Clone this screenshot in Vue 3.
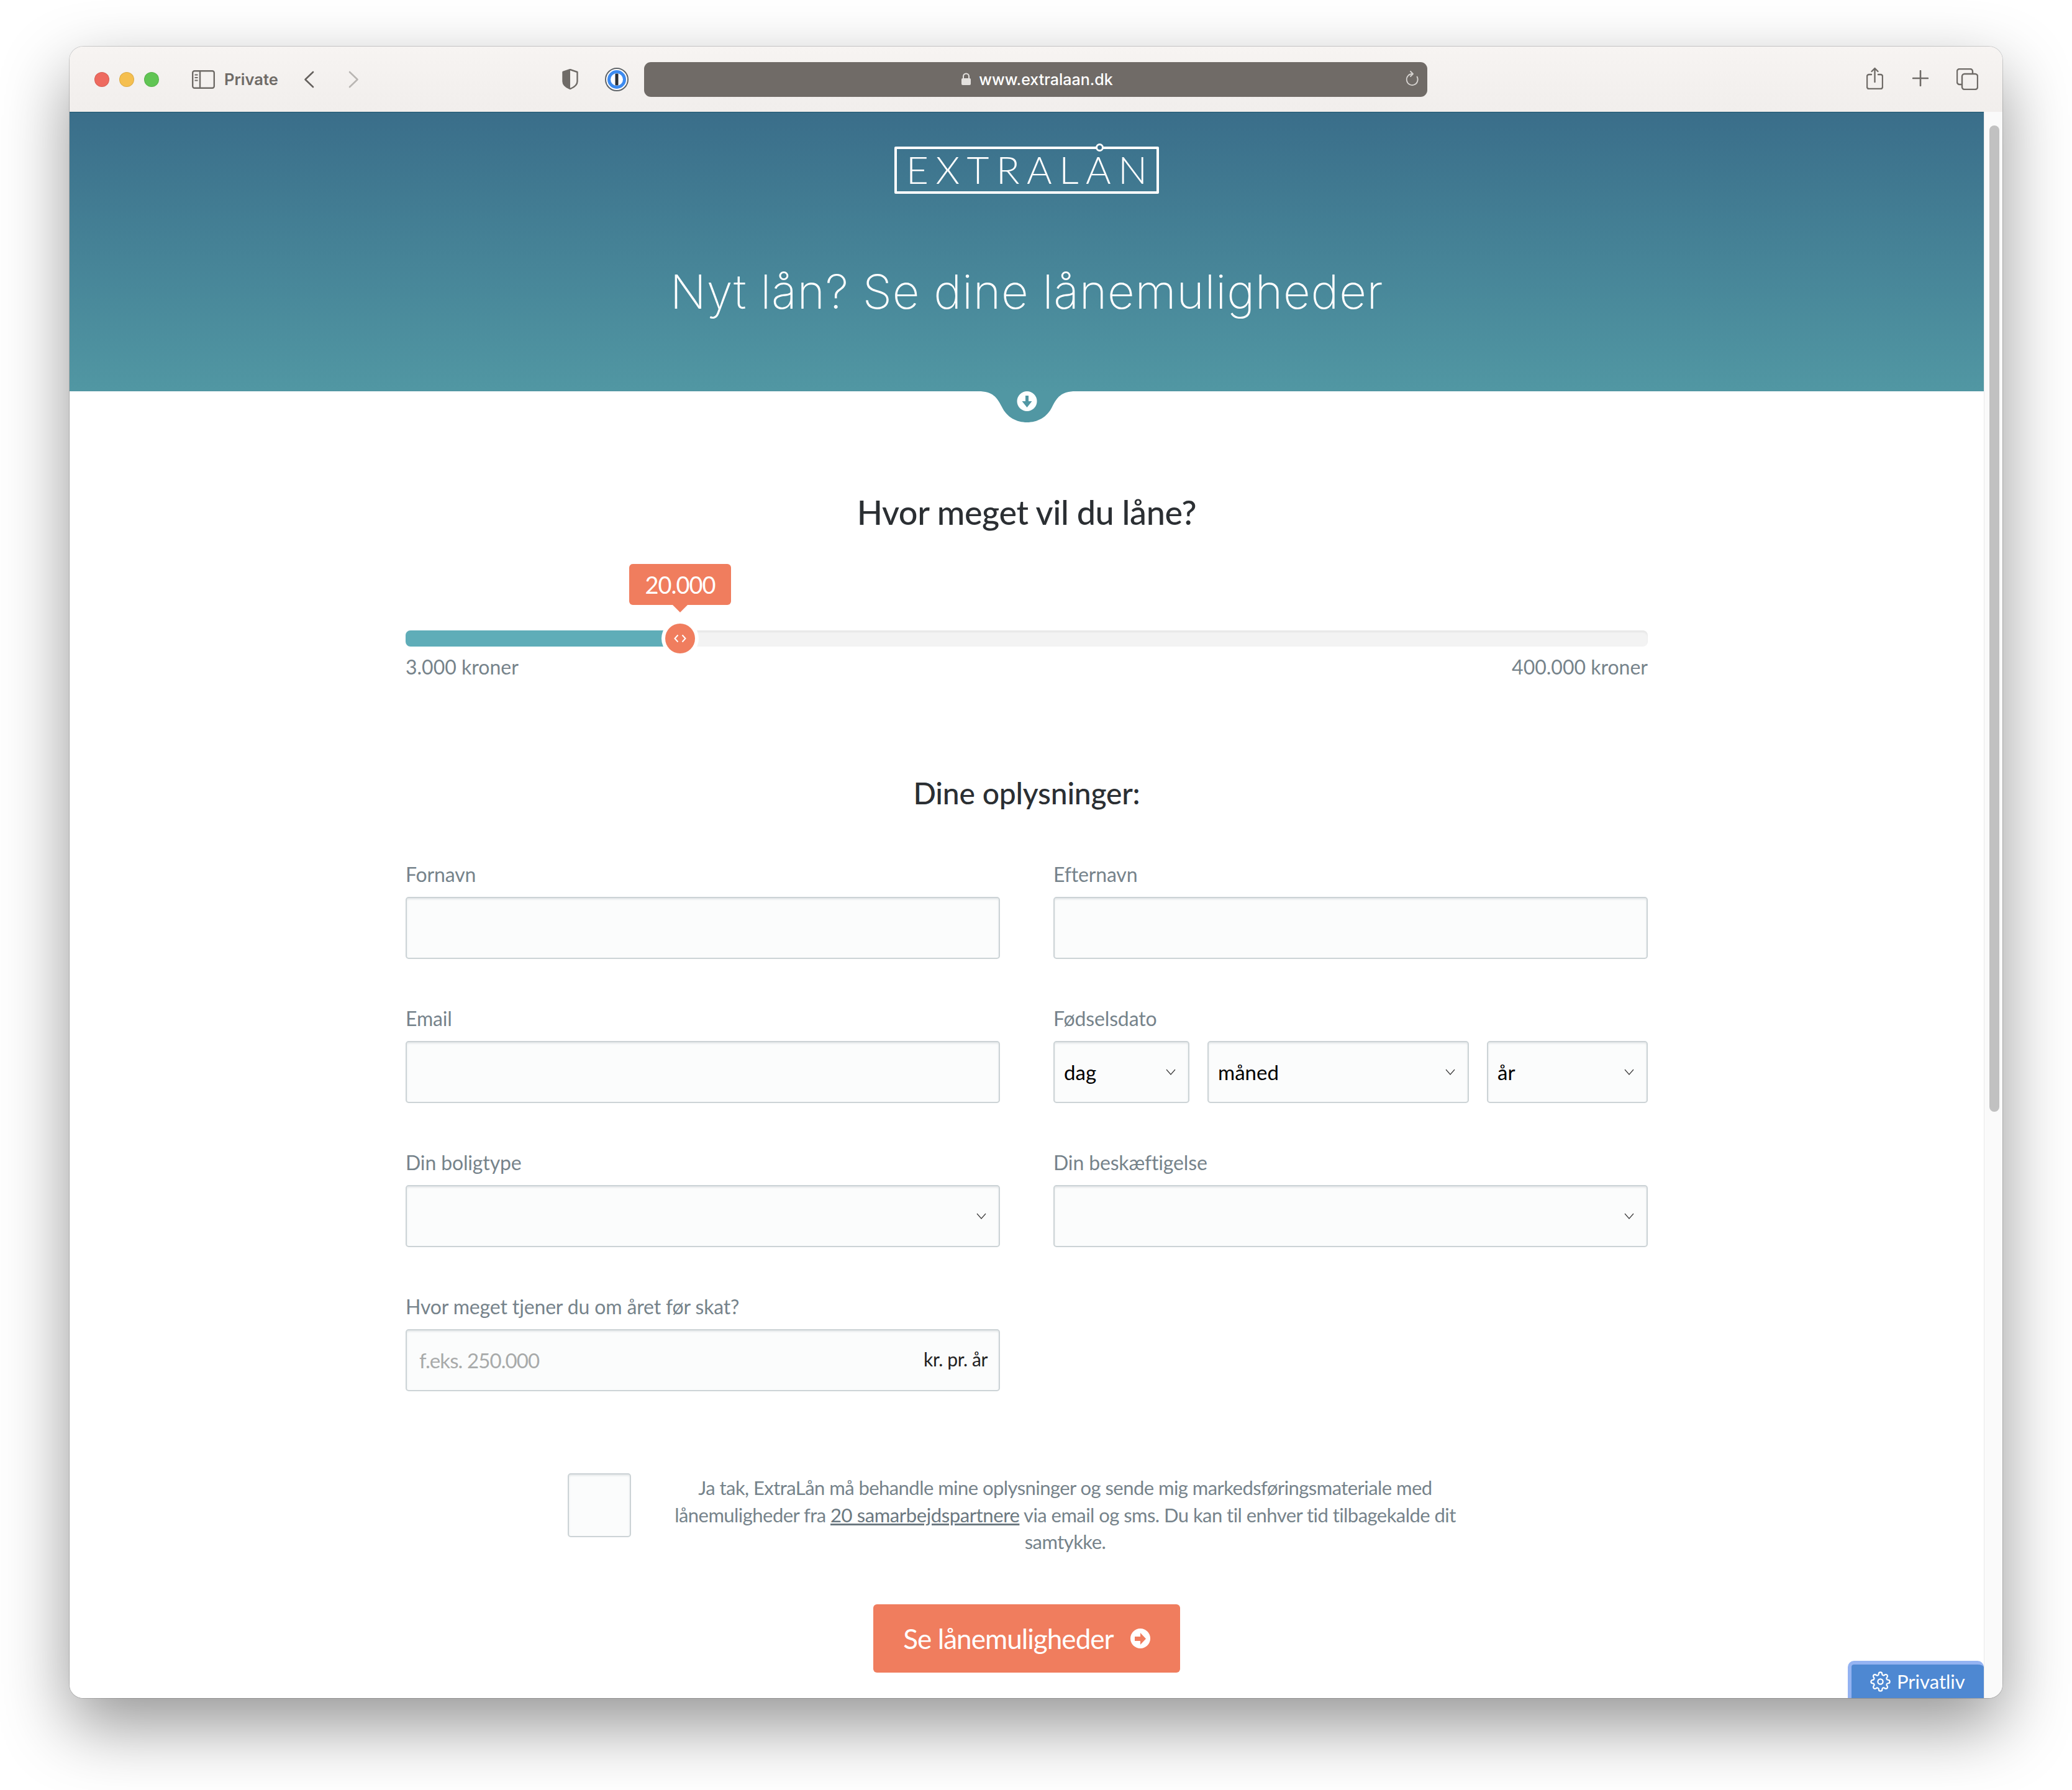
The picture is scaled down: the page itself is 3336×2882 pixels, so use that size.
<template>
  <div class="page">
    <div class="window">
      <div class="toolbar">
        <div class="lights">
          <span class="light red"></span>
          <span class="light yellow"></span>
          <span class="light green"></span>
        </div>
        <svg class="tb-sidebar" width="37" height="30" viewBox="0 0 37 30" fill="none" stroke="#6f6b67" stroke-width="2.4">
          <rect x="1.2" y="1.2" width="34.6" height="27.6" rx="3" />
          <path d="M13 1v28" />
          <path d="M4.500 7.500h5M4.500 12h5M4.500 16.500h5" stroke-width="2" />
        </svg>
        <span class="tb-private">Private</span>
        <svg class="tb-back" width="17" height="28" viewBox="0 0 17 28" fill="none" stroke="#65615e" stroke-width="2.600" stroke-linecap="round" stroke-linejoin="round">
          <path d="M15 2 2.500 14 15 26" />
        </svg>
        <svg class="tb-forward" width="17" height="28" viewBox="0 0 17 28" fill="none" stroke="#b9b6b3" stroke-width="2.600" stroke-linecap="round" stroke-linejoin="round">
          <path d="M2 2l12.500 12L2 26" />
        </svg>
        <svg class="tb-shield" width="26" height="33" viewBox="0 0 26 33">
          <path d="M13 1 24.500 5v15c0 5-5 9.500-11.500 12C6.500 29.500 1.500 25 1.500 20V5z" fill="none" stroke="#6f6b67" stroke-width="2.400" stroke-linejoin="round" />
          <path d="M13 1 1.500 5v15c0 5 5 9.500 11.500 12z" fill="#6f6b67" />
        </svg>
        <svg class="tb-onepass" width="38" height="38" viewBox="0 0 38 38">
          <circle cx="19" cy="19" r="18" fill="#fff" stroke="#5f6468" stroke-width="2" />
          <circle cx="19" cy="19" r="12.500" fill="#fff" stroke="#3d8bf0" stroke-width="5" />
          <rect x="16.500" y="9.500" width="5" height="19" rx="1" fill="#2a2e33" />
        </svg>
        <div class="address">
          <svg class="lock" width="17" height="21" viewBox="0 0 17 21">
            <path d="M4 9V6a4.500 4.500 0 0 1 9 0v3" fill="none" stroke="#e4e1de" stroke-width="2" />
            <rect x="1" y="9" width="15" height="11" rx="2" fill="#e4e1de" />
          </svg>
          <span class="url">www.extralaan.dk</span>
          <svg class="reload" width="22" height="25" viewBox="0 0 22 25" fill="none" stroke="#d6d3d0" stroke-width="1.800" stroke-linecap="round" stroke-linejoin="round">
            <path d="M18.500 9.500A9 9 0 1 1 11 5" />
            <path d="M8 1l4 4-4 4" />
          </svg>
        </div>
        <svg class="tb-share" width="27" height="36" viewBox="0 0 27 36" fill="none" stroke="#6f6b67" stroke-width="2.400" stroke-linecap="round" stroke-linejoin="round">
          <path d="M8 12H4a3 3 0 0 0-3 3v17a3 3 0 0 0 3 3h19a3 3 0 0 0 3-3V15a3 3 0 0 0-3-3h-4" />
          <path d="M13.500 24V2M8.500 7l5-5 5 5" />
        </svg>
        <svg class="tb-plus" width="26" height="26" viewBox="0 0 26 26" stroke="#6f6b67" stroke-width="2.600" stroke-linecap="round">
          <path d="M13 1v24M1 13h24" />
        </svg>
        <svg class="tb-tabs" width="35" height="35" viewBox="0 0 35 35" fill="none" stroke="#6f6b67" stroke-width="2.400">
          <path d="M8 26H5a4 4 0 0 1-4-4V5a4 4 0 0 1 4-4h17a4 4 0 0 1 4 4v3" />
          <rect x="9" y="9" width="25" height="25" rx="4" />
        </svg>
      </div>

      <div class="viewport">
        <main class="content">
          <header class="hero">
            <div class="logo"><span>EXTRALAN</span></div>
            <h1>Nyt lån? Se dine lånemuligheder</h1>
            <div class="notch">
              <svg width="157" height="50" viewBox="0 0 157 50">
                <path d="M0 0C24 0 30 10 38 25C46 42 62 50 78.500 50C95 50 111 42 119 25C127 10 133 0 157 0Z" fill="#5197a3" />
                <circle cx="78.500" cy="16" r="16" fill="#fff" />
                <path d="M76 7h5v9h5.500l-8 10-8-10H76z" fill="#5197a3" />
              </svg>
            </div>
          </header>

          <section class="form-area">
            <h2 class="first">Hvor meget vil du låne?</h2>
            <div class="slider">
              <div class="fill"></div>
              <div class="tip">20.000</div>
              <div class="thumb">
                <svg width="20" height="14" viewBox="0 0 20 14" fill="none" stroke="#fff" stroke-width="2">
                  <path d="M6.500 1.500 1.500 7l5 5.500M13.500 1.500l5 5.500-5 5.500" />
                </svg>
              </div>
            </div>
            <div class="range">
              <span>3.000 kroner</span>
              <span>400.000 kroner</span>
            </div>

            <h2 class="second">Dine oplysninger:</h2>
            <form class="fields" @submit.prevent>
              <div class="field">
                <label>Fornavn</label>
                <input type="text" />
              </div>
              <div class="field">
                <label>Efternavn</label>
                <input type="text" />
              </div>
              <div class="field">
                <label>Email</label>
                <input type="email" />
              </div>
              <div class="field">
                <label>Fødselsdato</label>
                <div class="date">
                  <div v-for="part in dateParts" :key="part" class="select-wrap">
                    <select>
                      <option>{{ part }}</option>
                    </select>
                    <svg class="chevron" width="16" height="10" viewBox="0 0 16 10" fill="none" stroke="#3c3c3c" stroke-width="1.200">
                      <path d="M1 1l7 8 7-8" />
                    </svg>
                  </div>
                </div>
              </div>
              <div class="field">
                <label>Din boligtype</label>
                <div class="select-wrap">
                  <select><option></option></select>
                  <svg class="chevron" width="16" height="10" viewBox="0 0 16 10" fill="none" stroke="#3c3c3c" stroke-width="1.200">
                    <path d="M1 1l7 8 7-8" />
                  </svg>
                </div>
              </div>
              <div class="field">
                <label>Din beskæftigelse</label>
                <div class="select-wrap">
                  <select><option></option></select>
                  <svg class="chevron" width="16" height="10" viewBox="0 0 16 10" fill="none" stroke="#3c3c3c" stroke-width="1.200">
                    <path d="M1 1l7 8 7-8" />
                  </svg>
                </div>
              </div>
              <div class="field">
                <label>Hvor meget tjener du om året før skat?</label>
                <div class="income">
                  <input type="text" placeholder="f.eks. 250.000" />
                  <span>kr. pr. år</span>
                </div>
              </div>
            </form>

            <div class="consent">
              <div class="check"></div>
              <p>
                Ja tak, ExtraLån må behandle mine oplysninger og sende mig markedsføringsmateriale med
                lånemuligheder fra <a href="#">20 samarbejdspartnere</a> via email og sms. Du kan til enhver tid tilbagekalde dit
                samtykke.
              </p>
            </div>

            <button class="submit" type="button">
              Se lånemuligheder
              <svg width="32" height="32" viewBox="0 0 32 32">
                <circle cx="16" cy="16" r="16" fill="#fff" />
                <path d="M7 13h9V7l9 9.500-9 9.500v-6H7z" fill="#f07d5e" />
              </svg>
            </button>
          </section>

          <div class="privacy">
            <svg width="33" height="33" viewBox="0 0 24 24" fill="none" stroke="#fff" stroke-width="1.600" stroke-linecap="round" stroke-linejoin="round">
              <circle cx="12" cy="12" r="3" />
              <path d="M19.400 15a1.650 1.650 0 0 0 .33 1.820l.06.06a2 2 0 0 1 0 2.830 2 2 0 0 1-2.830 0l-.06-.06a1.650 1.650 0 0 0-1.820-.33 1.650 1.650 0 0 0-1 1.510V21a2 2 0 0 1-2 2 2 2 0 0 1-2-2v-.09A1.650 1.650 0 0 0 9 19.400a1.650 1.650 0 0 0-1.820.33l-.06.06a2 2 0 0 1-2.830 0 2 2 0 0 1 0-2.830l.06-.06a1.650 1.650 0 0 0 .33-1.820 1.650 1.650 0 0 0-1.510-1H3a2 2 0 0 1-2-2 2 2 0 0 1 2-2h.09A1.650 1.650 0 0 0 4.600 9a1.650 1.650 0 0 0-.33-1.820l-.06-.06a2 2 0 0 1 0-2.830 2 2 0 0 1 2.830 0l.06.06a1.650 1.650 0 0 0 1.820.33H9a1.650 1.650 0 0 0 1-1.510V3a2 2 0 0 1 2-2 2 2 0 0 1 2 2v.09a1.650 1.650 0 0 0 1 1.510 1.650 1.650 0 0 0 1.820-.33l.06-.06a2 2 0 0 1 2.830 0 2 2 0 0 1 0 2.830l-.06.06a1.650 1.650 0 0 0-.33 1.820V9a1.650 1.650 0 0 0 1.510 1H21a2 2 0 0 1 2 2 2 2 0 0 1-2 2h-.09a1.650 1.650 0 0 0-1.510 1z" />
            </svg>
            Privatliv
          </div>
        </main>
        <div class="scrollbar">
          <div class="scroll-thumb"></div>
        </div>
      </div>
    </div>
  </div>
</template>

<script setup>
const dateParts = ["dag", "måned", "år"];
</script>

<style>
html,
body {
  margin: 0;
  background: #fff;
}
</style>

<style scoped>
.page {
  box-sizing: border-box;
  width: 3336px;
  height: 2882px;
  padding: 75px 112px 0;
  overflow: hidden;
  background: #fff;
  font-family: Lato, "Liberation Sans", sans-serif;
}

.window {
  width: 3112px;
  height: 2659px;
  border-radius: 22px;
  overflow: hidden;
  box-shadow: 0 0 0 1px rgba(0, 0, 0, 0.16), 0 44px 110px rgba(0, 0, 0, 0.42);
}

.toolbar {
  display: flex;
  align-items: center;
  height: 105px;
  padding-left: 40px;
  background: linear-gradient(#f7f4f2, #f1eeec);
}

.lights {
  display: flex;
  gap: 16px;
}

.light {
  width: 24px;
  height: 24px;
  border-radius: 50%;
  box-sizing: border-box;
  border: 1px solid rgba(0, 0, 0, 0.1);
}

.red { background: #ee6a5f; }
.yellow { background: #f5bf4f; }
.green { background: #61c554; }

.tb-sidebar { margin-left: 53px; }

.tb-private {
  width: 88px;
  margin-left: 15px;
  font-family: Inter, sans-serif;
  font-size: 25.500px;
  font-weight: 600;
  color: #6f6b67;
  white-space: nowrap;
}

.tb-back { margin-left: 40px; }
.tb-forward { margin-left: 55px; }
.tb-shield { margin-left: 327px; }
.tb-onepass { margin-left: 43px; }

.address {
  position: relative;
  display: flex;
  align-items: center;
  justify-content: center;
  gap: 12px;
  width: 1261px;
  height: 56px;
  margin-left: 25px;
  padding-left: 4px;
  box-sizing: border-box;
  border-radius: 11px;
  background: #706b67;
}

.url {
  font-family: Inter, sans-serif;
  font-size: 25px;
  font-weight: 500;
  color: #fff;
}

.reload {
  position: absolute;
  right: 13px;
  top: 14px;
}

.tb-share { margin-left: 707px; margin-top: -4px; }
.tb-plus { margin-left: 47px; margin-top: -4px; }
.tb-tabs { margin-left: 45px; margin-top: -1px; }

.viewport {
  display: flex;
  height: 2554px;
}

.content {
  position: relative;
  flex: 1;
  overflow: hidden;
  background: #fff;
}

.hero {
  position: relative;
  height: 450px;
  padding-top: 55px;
  box-sizing: border-box;
  border-top: 1px solid #1f5670;
  background: linear-gradient(#3a6e8a, #5197a3);
  color: #fff;
  text-align: center;
}

.logo {
  position: relative;
  box-sizing: border-box;
  display: flex;
  align-items: center;
  justify-content: center;
  width: 426px;
  height: 76px;
  margin: 0 auto;
  border: 4px solid #fff;
  border-radius: 2px;
  font-size: 62px;
  font-weight: 300;
  line-height: 1;
  letter-spacing: 11.500px;
}

.logo span {
  margin-right: -11.500px;
  margin-top: -4px;
}

.logo::after {
  content: "";
  position: absolute;
  left: 320px;
  top: -9px;
  width: 13px;
  height: 13px;
  box-sizing: border-box;
  border: 3px solid #fff;
  border-radius: 50%;
  background: #3a6e8a;
}

.hero h1 {
  margin: 107px 0 0;
  font-family: Inter, Lato, sans-serif;
  font-size: 76px;
  font-weight: 200;
  line-height: 100px;
  letter-spacing: 0.700px;
}

.notch {
  position: absolute;
  left: 50%;
  top: 449px;
  height: 50px;
  margin-left: -78.5px;
}

.form-area {
  box-sizing: border-box;
  width: 2000px;
  margin: 0 auto;
  padding-top: 163px;
}

h2 {
  margin: 0;
  font-size: 54px;
  font-weight: 500;
  line-height: 64px;
  letter-spacing: -0.400px;
  text-align: center;
  color: #2b2f33;
}

.slider {
  position: relative;
  height: 26px;
  margin-top: 158px;
  border-radius: 8px;
  background: #f3f3f3;
  box-shadow: inset 0 3px 3px rgba(0, 0, 0, 0.05);
}

.fill {
  width: 22.1%;
  height: 100%;
  border-radius: 8px 0 0 8px;
  background: #5fadb8;
}

.tip {
  position: absolute;
  left: 22.1%;
  bottom: 67px;
  width: 164px;
  height: 66px;
  margin-left: -82px;
  border-radius: 6px;
  background: #f07d5e;
  color: #fff;
  font-size: 38px;
  line-height: 66px;
  letter-spacing: -1px;
  text-align: center;
}

.tip::after {
  content: "";
  position: absolute;
  left: 50%;
  top: 100%;
  margin-left: -12px;
  border-style: solid;
  border-width: 12px 12px 0;
  border-color: #f07d5e transparent transparent;
}

.thumb {
  position: absolute;
  left: 22.1%;
  top: -11px;
  display: flex;
  align-items: center;
  justify-content: center;
  width: 48px;
  height: 48px;
  margin-left: -24px;
  border-radius: 50%;
  background: #f07d5e;
  box-shadow: 0 0 0 6px #fff;
}

.range {
  display: flex;
  justify-content: space-between;
  margin-top: 11px;
  font-size: 32px;
  line-height: 44px;
  color: #76838b;
}

.second {
  margin-top: 149px;
  font-size: 48px;
  letter-spacing: -0.200px;
}

.fields {
  display: grid;
  grid-template-columns: 957px 957px;
  column-gap: 86px;
  row-gap: 76px;
  margin-top: 79px;
}

.field label {
  display: block;
  height: 40px;
  margin-bottom: 16px;
  font-size: 32px;
  line-height: 40px;
  letter-spacing: -0.150px;
  color: #76838b;
}

input,
select {
  box-sizing: border-box;
  display: block;
  width: 100%;
  height: 100px;
  margin: 0;
  padding: 0 15px;
  border: 2px solid #ccd3d6;
  border-radius: 5px;
  outline: none;
  background: #fbfcfc;
  box-shadow: inset 0 2px 3px rgba(120, 135, 145, 0.18);
  font-family: Lato, sans-serif;
  font-size: 33px;
  color: #000;
  appearance: none;
}

.date {
  display: grid;
  grid-template-columns: 219px 421px 259px;
  column-gap: 29px;
}

.select-wrap {
  position: relative;
}

.chevron {
  position: absolute;
  right: 22px;
  top: 45px;
}

.income {
  position: relative;
}

.income input {
  padding-left: 20px;
  padding-right: 140px;
  letter-spacing: -0.900px;
}

.income input::placeholder {
  color: #a8aaaa;
  opacity: 1;
}

.income span {
  position: absolute;
  right: 20px;
  top: 28px;
  font-size: 30px;
  line-height: 40px;
  letter-spacing: -0.400px;
  color: #222;
}

.consent {
  display: flex;
  align-items: flex-start;
  gap: 22px;
  margin: 132px 261px 0;
}

.check {
  flex: none;
  box-sizing: border-box;
  width: 102px;
  height: 103px;
  border: 2px solid #ccd3d6;
  border-radius: 5px;
  background: #fbfcfc;
  box-shadow: inset 0 2px 3px rgba(120, 135, 145, 0.18);
}

.consent p {
  flex: 1;
  margin: 2px 0 0;
  font-size: 31px;
  line-height: 43.500px;
  letter-spacing: -0.550px;
  text-align: center;
  color: #76838b;
}

.consent a {
  color: #6b7880;
  letter-spacing: -0.400px;
}

.submit {
  display: flex;
  align-items: center;
  justify-content: center;
  gap: 27px;
  width: 494px;
  height: 110px;
  margin: 78px auto 0;
  border: none;
  border-radius: 6px;
  background: #f07d5e;
  color: #fff;
  font-family: Lato, sans-serif;
  font-size: 44px;
  letter-spacing: -0.950px;
}

.privacy {
  position: absolute;
  right: 0;
  bottom: 0;
  box-sizing: border-box;
  display: flex;
  align-items: center;
  gap: 10px;
  width: 219px;
  height: 60px;
  padding-left: 30px;
  border: solid #94b3f2;
  border-width: 6px 0 0 6px;
  border-radius: 10px 10px 0 0;
  background: #4e88d2;
  color: #fff;
  font-size: 31px;
}

.scrollbar {
  flex: none;
  box-sizing: border-box;
  width: 30px;
  padding: 22px 6px 0 8px;
  border-left: 1px solid #e8e8e8;
  background: #fafafa;
}

.scroll-thumb {
  width: 16px;
  height: 1588px;
  border-radius: 8px;
  background: #c1c1c1;
}
</style>
